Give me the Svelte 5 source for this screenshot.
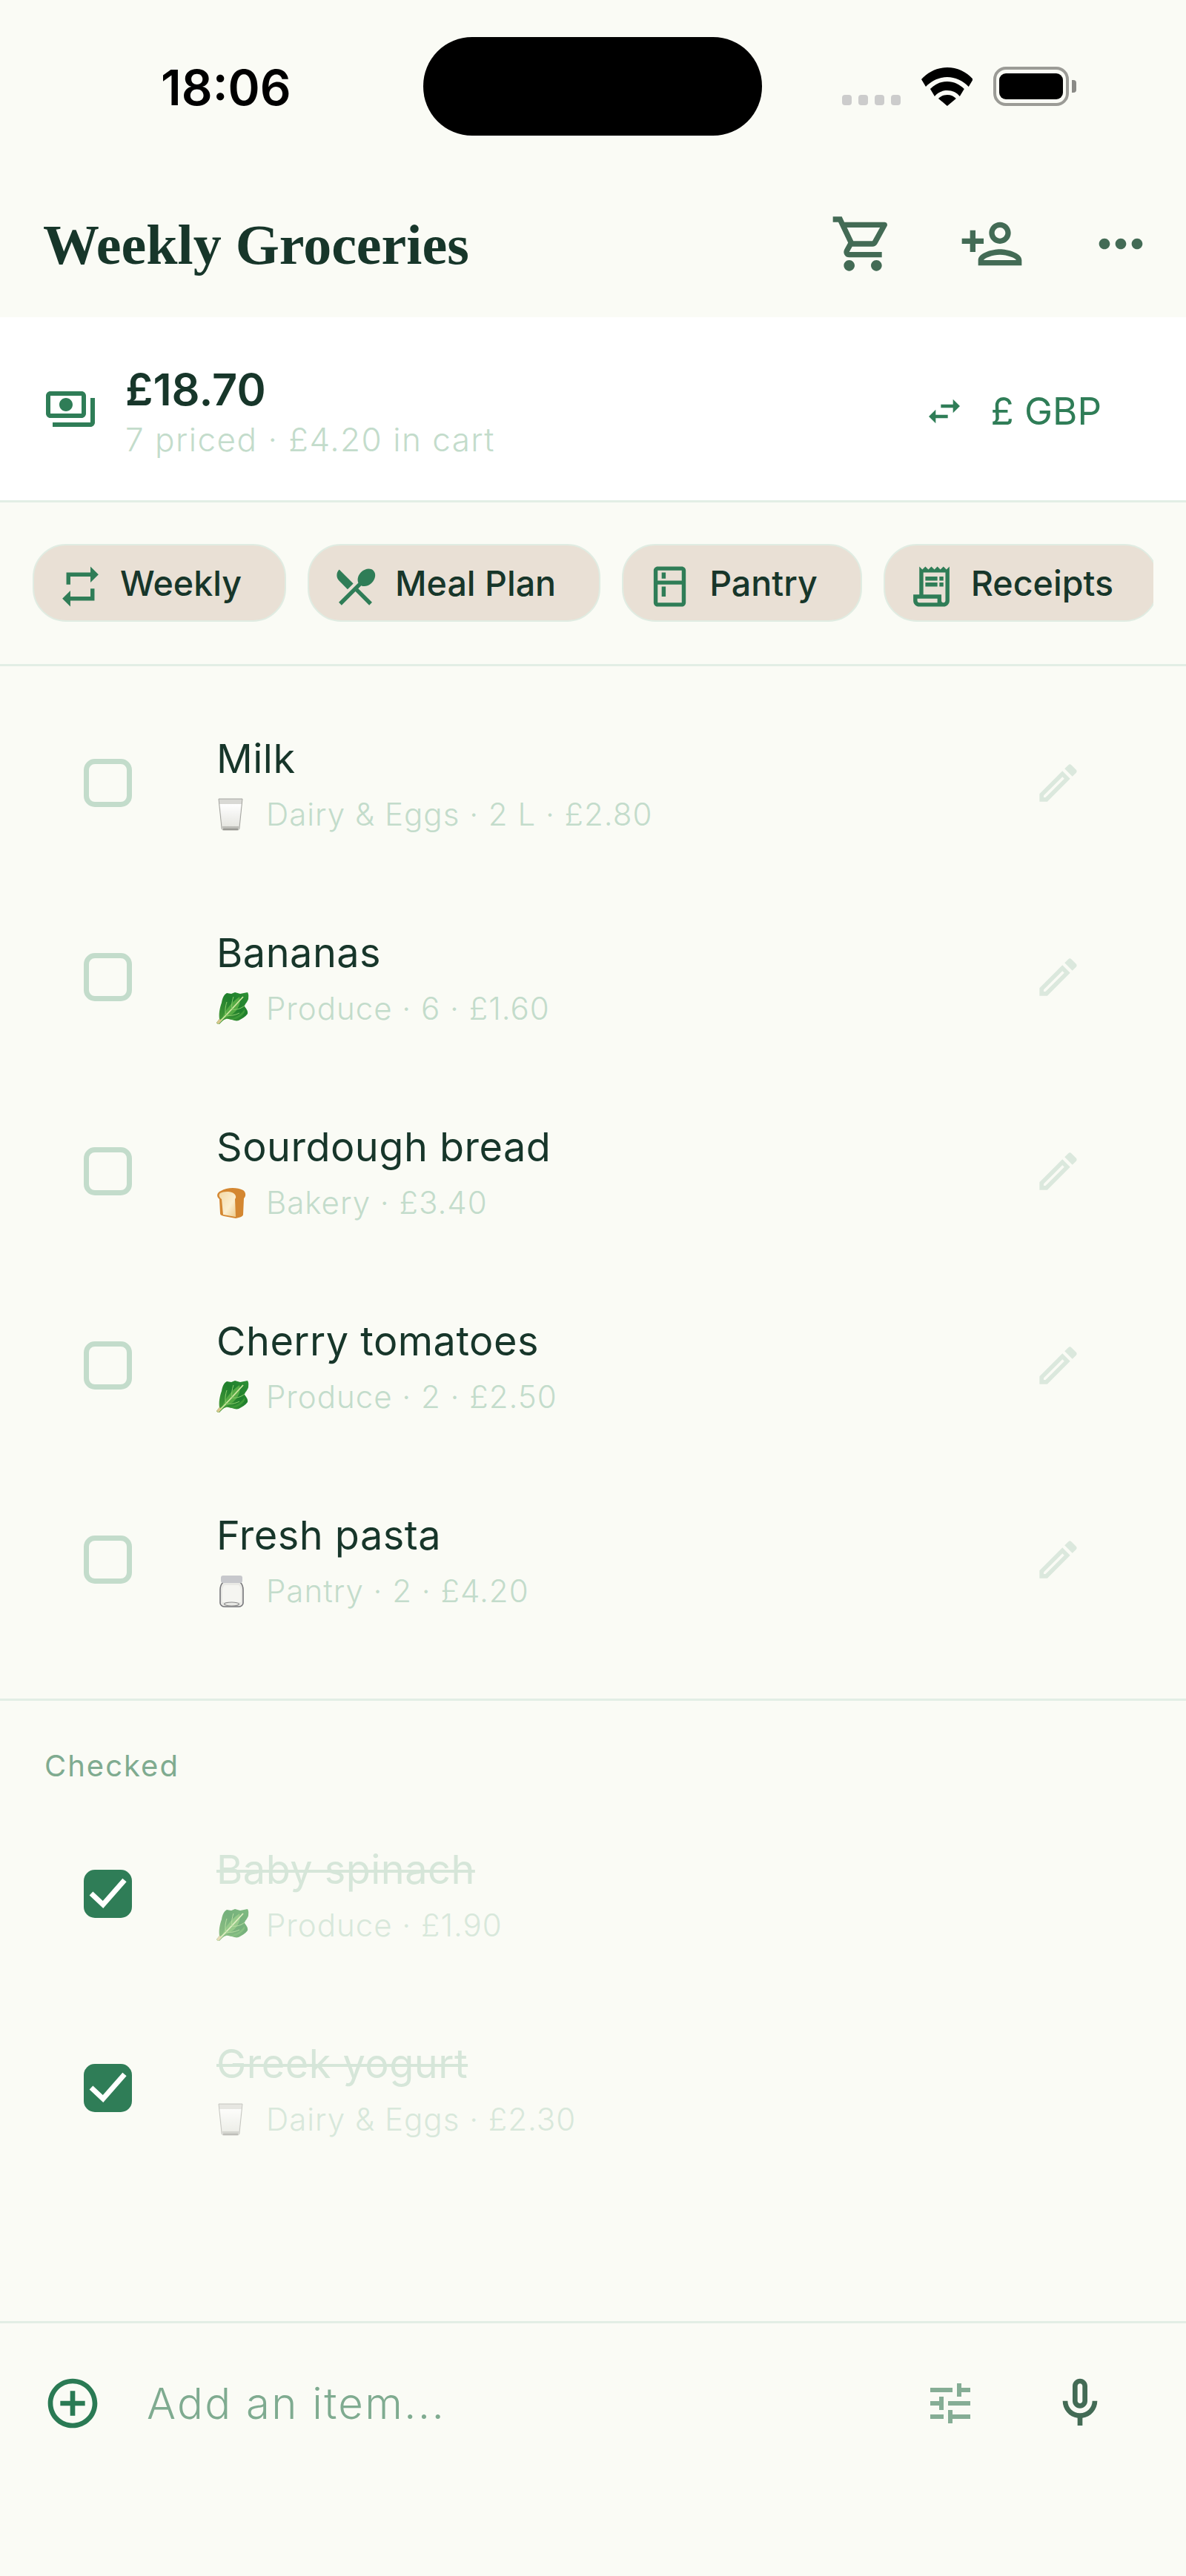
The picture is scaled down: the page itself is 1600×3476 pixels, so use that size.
<script lang="ts">
  const open = [
    { name: 'Milk', emoji: 'glass', meta: 'Dairy & Eggs · 2 L · £2.80' },
    { name: 'Bananas', emoji: 'leaf', meta: 'Produce · 6 · £1.60' },
    { name: 'Sourdough bread', emoji: 'bread', meta: 'Bakery · £3.40' },
    { name: 'Cherry tomatoes', emoji: 'leaf', meta: 'Produce · 2 · £2.50' },
    { name: 'Fresh pasta', emoji: 'jar', meta: 'Pantry · 2 · £4.20' }
  ]
  const checked = [
    { name: 'Baby spinach', emoji: 'leaf', meta: 'Produce · £1.90' },
    { name: 'Greek yogurt', emoji: 'glass', meta: 'Dairy & Eggs · £2.30' }
  ]
  const chips = [
    { label: 'Weekly', d: 'M7 7h10v3l4-4-4-4v3H5v6h2V7zm10 10H7v-3l-4 4 4 4v-3h12v-6h-2v4z' },
    { label: 'Meal Plan', d: 'M8.1 13.34l2.83-2.83L3.91 3.5c-1.56 1.56-1.56 4.09 0 5.66l4.19 4.18zm6.78-1.81c1.53.71 3.68.21 5.27-1.38 1.91-1.91 2.28-4.65.81-6.12-1.46-1.46-4.2-1.1-6.12.81-1.59 1.59-2.09 3.74-1.38 5.27L3.7 19.87l1.41 1.41L12 14.41l6.88 6.88 1.41-1.41L13.41 13l1.47-1.47z' },
    { label: 'Pantry', d: 'M18 2.01L6 2c-1.1 0-2 .89-2 2v16c0 1.1.9 2 2 2h12c1.1 0 2-.9 2-2V4c0-1.11-.9-1.99-2-1.99zM18 20H6v-9.02h12V20zm0-11H6V4h12v5zM8 5h2v3H8zm0 7h2v5H8z' },
    { label: 'Receipts', d: 'M19.5 3.5 18 2l-1.5 1.5L15 2l-1.5 1.5L12 2l-1.5 1.5L9 2 7.5 3.5 6 2v14H3v3c0 1.66 1.34 3 3 3h12c1.66 0 3-1.34 3-3V2l-1.5 1.5zM15 20H6c-.55 0-1-.45-1-1v-1h10v2zm4-1c0 .55-.45 1-1 1s-1-.45-1-1v-3H8V5h11v14zM9 7h6v2H9zm7 0h2v2h-2zm-7 3h6v2H9zm7 0h2v2h-2z' }
  ]
</script>

{#snippet emoji(kind)}
  <svg class="emoji" viewBox="0 0 44 44">
    {#if kind === 'glass'}
      <path d="M3 1h32l-4 39c0 2-1 3-3 3H10c-2 0-3-1-3-3z" fill="#d9d9d5" stroke="#a5a5a0" stroke-width="1" />
      <path d="M4.500 8h29l-3.300 30H7.800z" fill="url(#milk)" />
      <path d="M8 38h22l-.6 4H9z" fill="#bcbcb7" />
      <path d="M9 42h20" stroke="#7d7d78" stroke-width="1.200" />
    {:else if kind === 'leaf'}
      <path d="M0 41l4-5c-1-6 0-14 3-22 1-6 3-11 7-13l6 1 5-2 7 2 10-2c2 3 1 6 1 9-1 4-5 7-5 10 2 3 5 6 4 10-3 4-7 6-12 9-5 2-12-3-17-2-4 1-6 4-9 7-1 0-3 0-4-2z" fill="url(#leaf)" />
      <path d="M7 37c3-10 11-22 24-31 3 9-3 22-16 27z" fill="#55ab44" />
      <path d="M17 36c8-1 16-6 21-13 1 4-2 7-6 10-5 3-10 5-15 3z" fill="#3d9a38" />
      <path d="M2 42l5-5c9-9 19-20 29-31" stroke="#cfe6a0" stroke-width="1.800" fill="none" />
      <path d="M13 31c-2-5-1-12 1-18M13 31c6 1 12 0 18-3M21 23c-1-6 0-11 2-17M21 23c6 1 12-1 17-5" stroke="#8ccb6c" stroke-width="1" fill="none" />
      <path d="M0 41l4-5 3 2-4 5z" fill="#d9c68e" />
    {:else if kind === 'bread'}
      <path d="M6 6c8-5 22-5 30-1 4 3 4 8 1 11l-1 22c0 2-4 4-10 5l-16-3c-4-1-5-2-5-4L4 17C-1 13 1 8 6 6z" fill="#d48731" />
      <path d="M5 9c5-3 17-3 20 2 2 3 1 5 0 6l1 24-17-3-2-21c-4-3-4-6-2-8z" fill="url(#crumb)" />
    {:else}
      <path d="M9 10c-3 3-4 6-4 10v18c0 3 3 5 6 5h19c3 0 6-2 6-5V20c0-4-1-7-4-10z" fill="#e9e9e5" stroke="#76767a" stroke-width="1.600" />
      <path d="M11 14h19c2 2 3 4 3 7v16H8V21c0-3 1-5 3-7z" fill="#f5f5f1" />
      <ellipse cx="20.500" cy="39.500" rx="10" ry="2.500" fill="none" stroke="#8a8a8a" stroke-width="1.200" />
      <rect x="6" y="1" width="29" height="10" rx="3" fill="#c7c8cc" />
    {/if}
  </svg>
{/snippet}

{#snippet item(row, done)}
  <li class="row" class:done>
    <span class="box">
      {#if done}
        <svg viewBox="0 0 65 65"><path d="M10 32l16 15 29-33" fill="none" stroke="#fff" stroke-width="7" /></svg>
      {/if}
    </span>
    <div class="body">
      <div class="name">{row.name}</div>
      <div class="meta">{@render emoji(row.emoji)}<span>{row.meta}</span></div>
    </div>
    {#if !done}
      <svg class="edit" viewBox="0 0 24 24"><path d="M3 17.25V21h3.75L17.81 9.94l-3.75-3.75L3 17.25zM5.920 19H5v-.92l9.060-9.060.92.92L5.920 19zM20.710 7.040c.39-.39.39-1.020 0-1.410l-2.340-2.340c-.39-.39-1.020-.39-1.410 0l-1.830 1.830 3.750 3.750 1.830-1.830z" /></svg>
    {/if}
  </li>
{/snippet}

<svg class="defs" aria-hidden="true">
  <defs>
    <linearGradient id="milk" x1="0" y1="0" x2="0" y2="1">
      <stop offset="0" stop-color="#ffffff" />
      <stop offset="1" stop-color="#e6e6e1" />
    </linearGradient>
    <linearGradient id="leaf" x1="0" y1="1" x2="1" y2="0">
      <stop offset="0" stop-color="#4f9f3c" />
      <stop offset=".6" stop-color="#1f7f2c" />
      <stop offset="1" stop-color="#2f9136" />
    </linearGradient>
    <linearGradient id="crumb" x1="0" y1="0" x2="1" y2="1">
      <stop offset="0" stop-color="#f3d9a6" />
      <stop offset=".6" stop-color="#fbeecf" />
      <stop offset="1" stop-color="#eecb8c" />
    </linearGradient>
  </defs>
</svg>

<div class="screen">
  <div class="status">
    <span class="time">18:06</span>
    <span class="island"></span>
    <span class="signal"><i></i><i></i><i></i><i></i></span>
    <svg class="wifi" viewBox="0 0 70 52">
      <path d="M35 0C21 0 9 6 0 16l6 10c8-8 18-13 29-13s21 5 29 13l6-10C61 6 49 0 35 0z" />
      <path d="M35 19c-9 0-17 4-23 10l6 10c4-5 10-8 17-8s13 3 17 8l6-10c-6-6-14-10-23-10z" />
      <path d="M35 37c-5 0-9 2-12 5l12 10 12-10c-3-3-7-5-12-5z" />
    </svg>
    <span class="battery"><i></i></span>
    <span class="nub"></span>
  </div>

  <header class="top">
    <h1>Weekly Groceries</h1>
    <div class="actions">
      <svg class="cart" viewBox="0 0 24 24"><path d="M15.550 13c.75 0 1.410-.41 1.750-1.030l3.580-6.490c.37-.66-.11-1.480-.87-1.480H5.210l-.94-2H1v2h2l3.600 7.590-1.350 2.440C4.520 15.370 5.480 17 7 17h12v-2H7l1.100-2h7.450zM6.160 6h12.150l-2.760 5H8.530L6.160 6zM7 18c-1.100 0-1.990.9-1.990 2S5.900 22 7 22s2-.9 2-2-.9-2-2-2zm10 0c-1.100 0-1.990.9-1.990 2s.89 2 1.990 2 2-.9 2-2-.9-2-2-2z" /></svg>
      <svg class="person" viewBox="0 0 24 24"><path d="M15 12c2.210 0 4-1.790 4-4s-1.790-4-4-4-4 1.790-4 4 1.790 4 4 4zm0-6c1.100 0 2 .9 2 2s-.9 2-2 2-2-.9-2-2 .9-2 2-2zm0 8c-2.670 0-8 1.340-8 4v2h16v-2c0-2.660-5.330-4-8-4zm-6 4c.22-.72 3.310-2 6-2 2.700 0 5.800 1.290 6 2H9zm-3-3v-3h3v-2H6V7H4v3H1v2h3v3h2z" /></svg>
      <svg class="more" viewBox="0 0 24 24"><path d="M6 10c-1.100 0-2 .9-2 2s.9 2 2 2 2-.9 2-2-.9-2-2-2zm12 0c-1.100 0-2 .9-2 2s.9 2 2 2 2-.9 2-2-.9-2-2-2zm-6 0c-1.100 0-2 .9-2 2s.9 2 2 2 2-.9 2-2-.9-2-2-2z" /></svg>
    </div>
  </header>

  <section class="budget">
    <svg class="money" viewBox="0 0 24 24"><path d="M19 14V6c0-1.100-.9-2-2-2H3c-1.100 0-2 .9-2 2v8c0 1.100.9 2 2 2h14c1.100 0 2-.9 2-2zm-2 0H3V6h14v8zm-7-7c-1.660 0-3 1.340-3 3s1.340 3 3 3 3-1.340 3-3-1.340-3-3-3zm13 0v11c0 1.100-.9 2-2 2H4v-2h17V7h2z" /></svg>
    <div class="sum">
      <div class="total">£18.70</div>
      <div class="priced">7 priced · £4.20 in cart</div>
    </div>
    <svg class="swap" viewBox="0 0 24 24"><path d="M6.990 11L3 15l3.990 4v-3H14v-2H6.990v-3zM21 9l-3.990-4v3H10v2h7.010v3L21 9z" /></svg>
    <span class="currency">£ GBP</span>
  </section>

  <nav class="chips">
    <div class="chip-track">
      {#each chips as chip}
        <div class="chip">
          <svg viewBox="0 0 24 24"><path d={chip.d} /></svg>
          <span>{chip.label}</span>
        </div>
      {/each}
    </div>
  </nav>

  <ul class="list">
    {#each open as row}
      {@render item(row, false)}
    {/each}
  </ul>

  <section class="checked">
    <h2>Checked</h2>
    <ul class="done-list">
      {#each checked as row}
        {@render item(row, true)}
      {/each}
    </ul>
  </section>

  <footer class="add">
    <svg class="plus" viewBox="0 0 24 24"><path d="M13 7h-2v4H7v2h4v4h2v-4h4v-2h-4V7zm-1-5C6.480 2 2 6.480 2 12s4.480 10 10 10 10-4.480 10-10S17.520 2 12 2zm0 18c-4.410 0-8-3.590-8-8s3.590-8 8-8 8 3.590 8 8-3.590 8-8 8z" /></svg>
    <span class="placeholder">Add an item...</span>
    <svg class="tune" viewBox="0 0 24 24"><path d="M3 17v2h6v-2H3zM3 5v2h10V5H3zm10 16v-2h8v-2h-8v-2h-2v6h2zM7 9v2H3v2h4v2h2V9H7zm14 4v-2H11v2h10zm-6-4h2V7h4V5h-4V3h-2v6z" /></svg>
    <svg class="mic" viewBox="0 0 24 24"><path d="M12 14c1.660 0 3-1.340 3-3V5c0-1.660-1.340-3-3-3S9 3.340 9 5v6c0 1.660 1.340 3 3 3zm-1-9c0-.55.45-1 1-1s1 .45 1 1v6c0 .55-.45 1-1 1s-1-.45-1-1V5zm6 6c0 2.760-2.240 5-5 5s-5-2.240-5-5H5c0 3.530 2.610 6.430 6 6.920V21h2v-3.080c3.390-.49 6-3.390 6-6.920h-2z" /></svg>
  </footer>
</div>

<style>
  :global(body) {
    margin: 0;
    background: #fafbf5;
  }

  .defs {
    position: absolute;
    width: 0;
    height: 0;
  }

  .screen {
    width: 1600px;
    height: 3476px;
    display: flex;
    flex-direction: column;
    background: #fafbf5;
    color: #17362a;
    font-family: Inter, 'Liberation Sans', sans-serif;
    overflow: hidden;
  }

  /* status bar */
  .status {
    height: 230px;
    flex: none;
    display: flex;
    align-items: flex-start;
    box-sizing: border-box;
    padding: 50px 148px 0 217px;
  }
  .time {
    width: 355px;
    margin-top: 33px;
    font: 600 65.500px/72px Inter, sans-serif;
    color: #000;
  }
  .island {
    width: 457px;
    height: 133px;
    flex: none;
    border-radius: 66px;
    background: #000;
  }
  .signal {
    display: flex;
    gap: 9px;
    margin: 78px 0 0 108px;
  }
  .signal i {
    width: 13px;
    height: 14px;
    border-radius: 4px;
    background: #ccc;
  }
  .wifi {
    width: 70px;
    height: 52px;
    margin: 41px 0 0 28px;
    fill: #000;
  }
  .battery {
    width: 102px;
    height: 53px;
    margin: 40px 0 0 28px;
    box-sizing: border-box;
    border: 4px solid #9b9b96;
    border-radius: 17px;
    padding: 5px 4px;
    display: flex;
  }
  .battery i {
    flex: 1;
    border-radius: 9px;
    background: #000;
  }
  .nub {
    width: 6px;
    height: 17px;
    margin: 58px 0 0 4px;
    border-radius: 0 4px 4px 0;
    background: #8a8a86;
  }

  /* title row */
  .top {
    height: 198px;
    flex: none;
    display: flex;
    align-items: center;
    justify-content: space-between;
    box-sizing: border-box;
    padding: 0 44px 0 58px;
  }
  h1 {
    margin: 4px 0 0;
    font: 700 76px/1.2 'Liberation Serif', serif;
    color: #17362a;
  }
  .actions {
    display: flex;
    align-items: center;
    fill: #436b55;
  }
  .actions svg {
    width: 88px;
    height: 88px;
    display: block;
  }
  .cart { margin-right: 86px; }
  .person { margin-right: 86px; }

  /* budget */
  .budget {
    height: 250px;
    flex: none;
    box-sizing: border-box;
    display: flex;
    align-items: center;
    padding: 0 114px 0 59px;
    background: #fff;
    border-bottom: 3px solid #e2eee5;
    fill: #2f7d57;
  }
  .money {
    width: 72px;
    height: 72px;
    flex: none;
  }
  .sum {
    flex: 1;
    margin-left: 38px;
    padding-top: 4px;
  }
  .total {
    font-size: 59.500px;
    line-height: 72px;
    font-weight: 600;
    color: #17362a;
  }
  .priced {
    margin-top: 6px;
    font-size: 44px;
    line-height: 52px;
    font-weight: 300;
    letter-spacing: 1.500px;
    color: #c3dccb;
  }
  .swap {
    width: 56px;
    height: 56px;
    flex: none;
    margin-top: 6px;
  }
  .currency {
    margin: 6px 0 0 35px;
    font-size: 51px;
    color: #2f7d57;
  }

  /* chips */
  .chips {
    flex: none;
    height: 221px;
    box-sizing: border-box;
    padding: 56px 44px 0;
    border-bottom: 3px solid #e2eee5;
  }
  .chip-track {
    display: flex;
    gap: 29px;
    overflow: hidden;
  }
  .chip {
    height: 105px;
    flex: none;
    display: flex;
    align-items: center;
    gap: 21px;
    box-sizing: border-box;
    padding: 0 58px 0 30px;
    border: 2px solid #e0ece2;
    border-radius: 45px;
    background: #e9e0d5;
  }
  .chip svg {
    width: 65px;
    height: 65px;
    flex: none;
    fill: #2f7d57;
    margin-top: 9px;
  }
  .chip span {
    font-size: 46.600px;
    font-weight: 500;
    color: #17362a;
  }

  /* rows */
  ul {
    list-style: none;
    margin: 0;
    padding: 0;
  }
  .list {
    flex: none;
    padding: 26px 0 57px;
    border-bottom: 3px solid #e2eee5;
  }
  .row {
    height: 262px;
    display: flex;
    align-items: center;
    box-sizing: border-box;
    padding: 0 139px 0 113px;
  }
  .box {
    width: 65px;
    height: 65px;
    flex: none;
    box-sizing: border-box;
    border: 7px solid #c3dccb;
    border-radius: 15px;
  }
  .done .box {
    border: 0;
    background: #2f7d57;
  }
  .box svg {
    display: block;
  }
  .body {
    flex: 1;
    margin-left: 114px;
    padding-top: 4px;
  }
  .name {
    font-size: 54px;
    line-height: 66px;
    color: #17362a;
    letter-spacing: .5px;
  }
  .meta {
    display: flex;
    align-items: center;
    margin-top: 16px;
    font-size: 42px;
    line-height: 52px;
    font-weight: 300;
    letter-spacing: 1px;
    color: #c3dccb;
  }
  .emoji {
    width: 44px;
    height: 44px;
    flex: none;
    margin-right: 23px;
  }
  .done .name {
    color: #c3dccb;
    text-decoration: line-through;
    text-decoration-thickness: 4px;
    opacity: .65;
  }
  .done .meta {
    opacity: .6;
  }
  .edit {
    width: 67px;
    height: 67px;
    flex: none;
    fill: #dbe8dd;
  }

  /* checked */
  .checked {
    flex: 1;
  }
  h2 {
    margin: 0;
    height: 129px;
    box-sizing: border-box;
    padding: 64px 0 0 60px;
    font-size: 40px;
    line-height: 48px;
    font-weight: 400;
    letter-spacing: 2px;
    color: #7fab90;
  }

  /* add bar */
  .add {
    height: 344px;
    flex: none;
    box-sizing: border-box;
    display: flex;
    align-items: flex-start;
    padding: 68px 103px 0 58px;
    border-top: 3px solid #e2eee5;
  }
  .add svg {
    flex: none;
  }
  .plus {
    width: 80px;
    height: 80px;
    fill: #2a7a54;
  }
  .placeholder {
    flex: 1;
    margin-left: 60px;
    font-size: 58px;
    line-height: 80px;
    font-weight: 300;
    letter-spacing: 2.300px;
    color: #7fab90;
  }
  .tune {
    width: 72px;
    height: 72px;
    margin-top: 4px;
    fill: #85ad95;
  }
  .mic {
    width: 80px;
    height: 80px;
    margin-left: 99px;
    fill: #436b55;
  }
</style>
